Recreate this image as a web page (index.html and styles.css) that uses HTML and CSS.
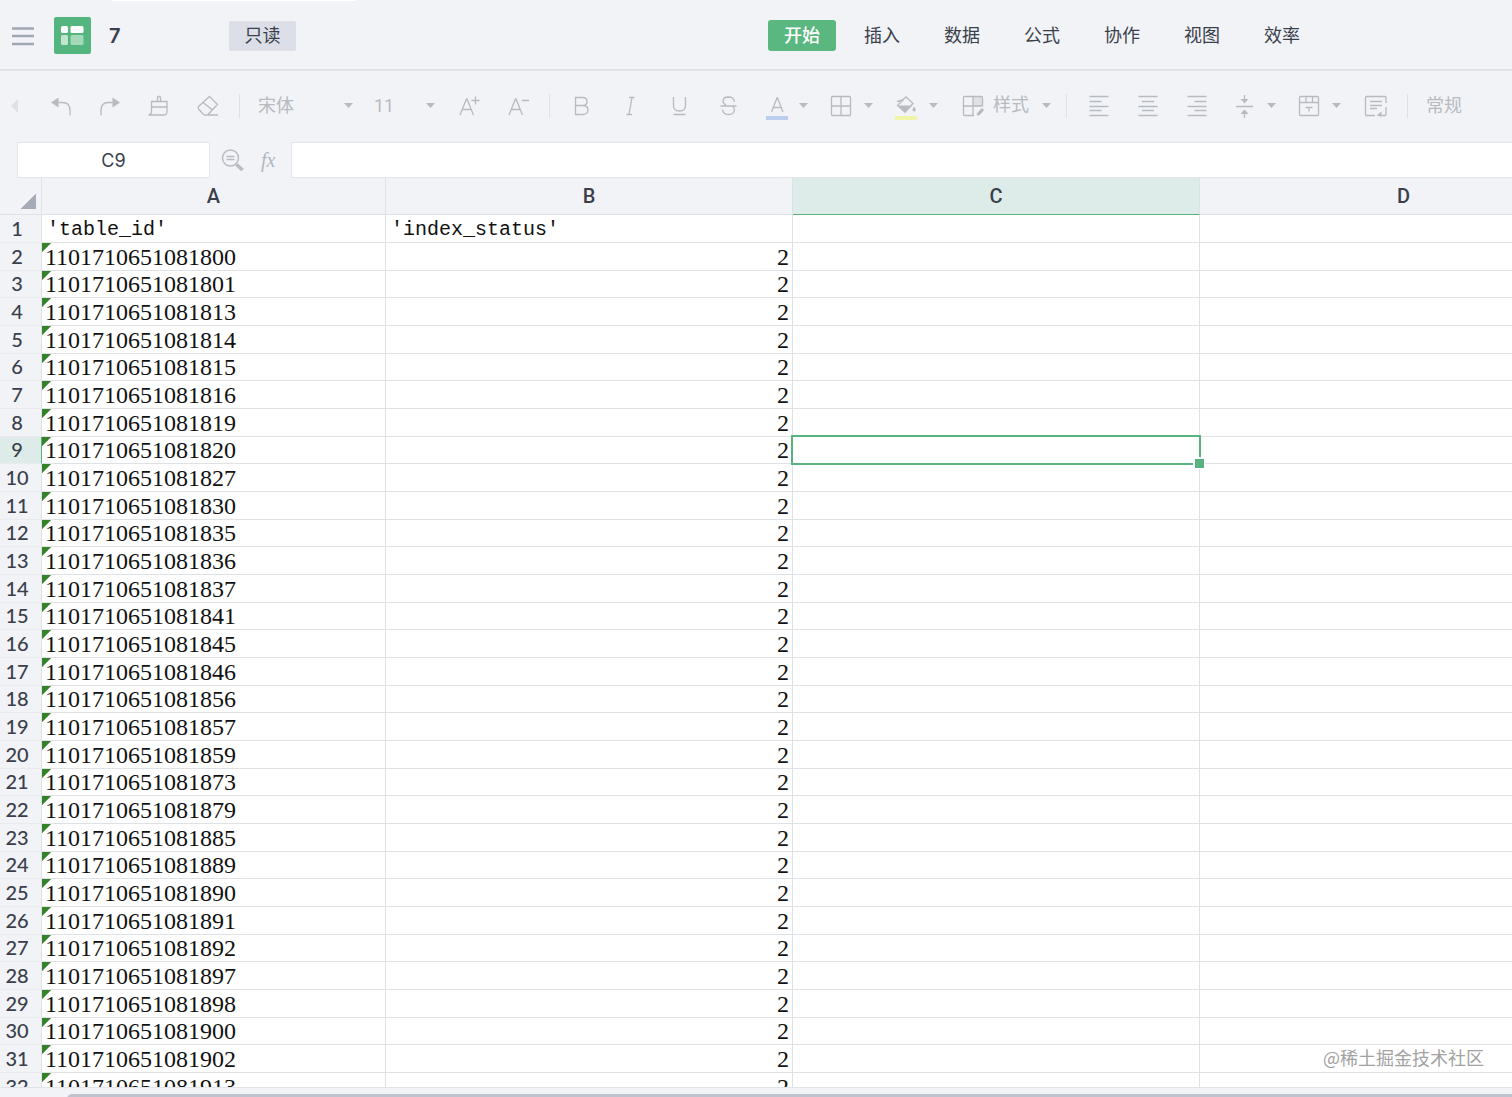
FILE: index.html
```html
<!DOCTYPE html>
<html lang="zh-CN">
<head>
<meta charset="utf-8">
<title>7</title>
<link rel="stylesheet" href="styles.css">
</head>
<body>

<header class="topbar">
  <div class="doc">
    <button class="menu" aria-label="菜单"><svg width="22" height="20" viewBox="0 0 22 20"><path d="M0 2.500h22M0 10h22M0 18h22" stroke="#a3a7b3" stroke-width="2.500"/></svg></button>
    <svg class="logo" width="37" height="37" viewBox="0 0 37 37"><rect width="37" height="37" rx="2" fill="#55b57e"/><rect x="7" y="9" width="7" height="7" rx="1.500" fill="#fff"/><rect x="16.500" y="9" width="13" height="7" rx="1.500" fill="#fff"/><rect x="7" y="18" width="7" height="10" rx="1.500" fill="#c2e5d0"/><rect x="16.500" y="18" width="13" height="10" rx="1.500" fill="#a5d8b9"/></svg>
    <h1 class="name">7</h1>
    <span class="readonly">只读</span>
  </div>
  <nav class="tabs">
    <button class="tab active">开始</button>
    <button class="tab">插入</button>
    <button class="tab">数据</button>
    <button class="tab">公式</button>
    <button class="tab">协作</button>
    <button class="tab">视图</button>
    <button class="tab">效率</button>
  </nav>
</header>

<div class="toolbar">
  <button class="tool collapse" aria-label="收起"><svg width="8" height="14" viewBox="0 0 8 14"><path class="solid faint" d="M7 0v14L0 7z"/></svg></button>
  <button class="tool" aria-label="撤销"><svg class="icon" viewBox="0 0 24 24"><path class="solid" d="M2 8.500 9.500 3.500v10z"/><path d="M9 8.500h4.500q7.500 0 7.500 8V21.500"/></svg></button>
  <button class="tool" aria-label="恢复"><svg class="icon" viewBox="0 0 24 24"><path class="solid" d="M22 8.500 14.500 3.500v10z"/><path d="M15 8.500h-4.500q-7.500 0-7.500 8V21.500"/></svg></button>
  <button class="tool" aria-label="格式刷"><svg class="icon" viewBox="0 0 24 24"><path d="M10.500 7.500v-4q0-1 1-1h1q1 0 1 1v4M4.500 7.500H20v10q0 3.500-3.500 3.500H1.500q3-.5 3-4zM4.500 13H20"/></svg></button>
  <button class="tool" aria-label="清除"><svg class="icon" viewBox="0 0 24 24"><path d="M13.500 2.500 21.500 10.500 12 20.500q-.5.500-1.500.500H9q-1 0-1.500-.5L2.500 15q-1-1.500 0-2.500zM7 8.500l9.500 7.500M8 21h14"/></svg></button>
  <i class="sep"></i>
  <div class="pick font">
    <select aria-label="字体"><option>宋体</option></select>
    <svg class="caret" viewBox="0 0 9 5"><path class="solid" d="M0 0h9L4.500 5z"/></svg>
  </div>
  <div class="pick size">
    <select aria-label="字号"><option>11</option></select>
    <svg class="caret" viewBox="0 0 9 5"><path class="solid" d="M0 0h9L4.500 5z"/></svg>
  </div>
  <button class="tool" aria-label="增大字号"><svg class="icon" viewBox="0 0 24 24"><path d="M3 21 9.500 5h.5L16.500 21M5.500 15.500H14M14.500 6.500h8M18.500 2.500v8"/></svg></button>
  <button class="tool" aria-label="减小字号"><svg class="icon" viewBox="0 0 24 24"><path d="M3 21 9.500 5h.5L16.500 21M5.500 15.500H14M16 6.500h7"/></svg></button>
  <i class="sep"></i>
  <button class="tool" aria-label="加粗"><svg class="icon" viewBox="0 0 24 24"><path d="M5.500 3.500h7q4.500 0 4.500 4t-4.500 4h-7zM5.500 11.500h8q4.500.5 4.500 4.500t-4.500 4.500h-8z"/></svg></button>
  <button class="tool" aria-label="斜体"><svg class="icon" viewBox="0 0 24 24"><path d="M10 3.500h5.500M7.500 20.500H13M13 3.500l-3 17"/></svg></button>
  <button class="tool" aria-label="下划线"><svg class="icon" viewBox="0 0 24 24"><path d="M5.500 3v8.500q0 5.500 6 5.500t6-5.500V3M5.500 20.500h12"/></svg></button>
  <button class="tool" aria-label="删除线"><svg class="icon" viewBox="0 0 24 24"><path d="M17.500 8q-.5-5-6-5-5.500.2-5.500 4 0 2.500 3 4M3.500 12h16M5.500 15.500q.5 5 6 5t6-4.500q0-2.500-2.500-4"/></svg></button>
  <button class="tool split" aria-label="字体颜色"><svg class="icon" viewBox="0 0 24 24"><path d="M6.500 18 12 4h.5L18 18M8.500 13.500H16"/><path d="M1 24h22" class="blue"/></svg><svg class="caret" viewBox="0 0 9 5"><path class="solid" d="M0 0h9L4.500 5z"/></svg></button>
  <button class="tool split" aria-label="边框"><svg class="icon" viewBox="0 0 24 24"><rect x="1.500" y="2.500" width="19" height="19" rx="1"/><path d="M11 2.500v19M1.500 12h19"/></svg><svg class="caret" viewBox="0 0 9 5"><path class="solid" d="M0 0h9L4.500 5z"/></svg></button>
  <button class="tool split" aria-label="填充颜色"><svg class="icon" viewBox="0 0 24 24"><path d="M2 7.500q5-.5 9-4.500L18 9.500 10 18 2.500 11.500 9 5"/><path class="solid" d="M3 11.500h14.500L10 18.500zM19 12.500q3.500 4.500 0 5-3-.5 0-5z"/><path d="M0 24h22" class="yellow"/></svg><svg class="caret" viewBox="0 0 9 5"><path class="solid" d="M0 0h9L4.500 5z"/></svg></button>
  <button class="tool style"><svg class="icon" viewBox="0 0 24 24"><path class="solid faint" d="M12 3h9v9h-9z"/><path d="M13 21.500H3.500q-1 0-1-1v-17q0-1 1-1h17q1 0 1 1V12M12 2.500v19M2.500 12h19"/><path class="pen" d="M16.500 21l5.500-6"/></svg><span>样式</span><svg class="caret" viewBox="0 0 9 5"><path class="solid" d="M0 0h9L4.500 5z"/></svg></button>
  <i class="sep"></i>
  <button class="tool" aria-label="左对齐"><svg class="icon" viewBox="0 0 24 24"><path d="M2.500 2.500h19M2.500 7.500h12M2.500 12.500h19M2.500 16.500h12M2.500 21.500h19"/></svg></button>
  <button class="tool" aria-label="居中"><svg class="icon" viewBox="0 0 24 24"><path d="M2.500 2.500h19M6 7.500h12M2.500 12.500h19M6 16.500h12M2.500 21.500h19"/></svg></button>
  <button class="tool" aria-label="右对齐"><svg class="icon" viewBox="0 0 24 24"><path d="M2.500 2.500h19M9.500 7.500h12M2.500 12.500h19M9.500 16.500h12M2.500 21.500h19"/></svg></button>
  <button class="tool split" aria-label="垂直对齐"><svg class="icon" viewBox="0 0 24 24"><path d="M3 12.500h17M11.500 1v6M11.500 18v6"/><path class="solid" d="M7.500 5h8l-4 4.500zM7.500 20h8l-4-4.500z"/></svg><svg class="caret" viewBox="0 0 9 5"><path class="solid" d="M0 0h9L4.500 5z"/></svg></button>
  <button class="tool split" aria-label="合并单元格"><svg class="icon" viewBox="0 0 24 24"><rect x="1.500" y="2.500" width="19" height="19" rx="1"/><path d="M1.500 8.500h19M8 2.500v6M14.500 2.500v6M7.500 13.500h7M11 13.500v4"/></svg><svg class="caret" viewBox="0 0 9 5"><path class="solid" d="M0 0h9L4.500 5z"/></svg></button>
  <button class="tool" aria-label="自动换行"><svg class="icon" viewBox="0 0 24 24"><path d="M22 9V3.500q0-1-1-1H2.500q-1 0-1 1v17q0 1 1 1H11M22 13v7.500q0 1-1 1h-5.500M6 7.500h12M6 11.500h12M6 14.500h7"/><path class="solid" d="M12.500 21.500l5-4v5z"/></svg></button>
  <i class="sep"></i>
  <div class="pick format">
    <select aria-label="数字格式"><option>常规</option></select>
  </div>
</div>

<div class="formula">
  <input class="cellname" type="text" value="C9" aria-label="单元格">
  <svg class="find" width="24" height="24" viewBox="0 0 24 24"><circle cx="9.500" cy="10" r="8"/><path d="M5.500 8.500h8M5.500 11.500h8"/><path class="handle" d="M15.500 16.500l6 5.500"/></svg>
  <label class="fx" for="fx">fx</label>
  <input class="value" id="fx" type="text">
</div>

<main class="sheet">
<table>
<colgroup><col class="c-num"><col class="c-a"><col class="c-b"><col class="c-c"><col class="c-d"></colgroup>
<thead>
<tr><th class="corner"></th><th>A</th><th>B</th><th class="on">C</th><th>D</th></tr>
</thead>
<tbody>
<tr class="labels"><th>1</th><td>'table_id'</td><td>'index_status'</td><td></td><td></td></tr>
<tr><th>2</th><td>1101710651081800</td><td>2</td><td></td><td></td></tr>
<tr><th>3</th><td>1101710651081801</td><td>2</td><td></td><td></td></tr>
<tr><th>4</th><td>1101710651081813</td><td>2</td><td></td><td></td></tr>
<tr><th>5</th><td>1101710651081814</td><td>2</td><td></td><td></td></tr>
<tr><th>6</th><td>1101710651081815</td><td>2</td><td></td><td></td></tr>
<tr><th>7</th><td>1101710651081816</td><td>2</td><td></td><td></td></tr>
<tr><th>8</th><td>1101710651081819</td><td>2</td><td></td><td></td></tr>
<tr><th class="on">9</th><td>1101710651081820</td><td>2</td><td class="selected"><div class="cursor"></div></td><td></td></tr>
<tr><th>10</th><td>1101710651081827</td><td>2</td><td></td><td></td></tr>
<tr><th>11</th><td>1101710651081830</td><td>2</td><td></td><td></td></tr>
<tr><th>12</th><td>1101710651081835</td><td>2</td><td></td><td></td></tr>
<tr><th>13</th><td>1101710651081836</td><td>2</td><td></td><td></td></tr>
<tr><th>14</th><td>1101710651081837</td><td>2</td><td></td><td></td></tr>
<tr><th>15</th><td>1101710651081841</td><td>2</td><td></td><td></td></tr>
<tr><th>16</th><td>1101710651081845</td><td>2</td><td></td><td></td></tr>
<tr><th>17</th><td>1101710651081846</td><td>2</td><td></td><td></td></tr>
<tr><th>18</th><td>1101710651081856</td><td>2</td><td></td><td></td></tr>
<tr><th>19</th><td>1101710651081857</td><td>2</td><td></td><td></td></tr>
<tr><th>20</th><td>1101710651081859</td><td>2</td><td></td><td></td></tr>
<tr><th>21</th><td>1101710651081873</td><td>2</td><td></td><td></td></tr>
<tr><th>22</th><td>1101710651081879</td><td>2</td><td></td><td></td></tr>
<tr><th>23</th><td>1101710651081885</td><td>2</td><td></td><td></td></tr>
<tr><th>24</th><td>1101710651081889</td><td>2</td><td></td><td></td></tr>
<tr><th>25</th><td>1101710651081890</td><td>2</td><td></td><td></td></tr>
<tr><th>26</th><td>1101710651081891</td><td>2</td><td></td><td></td></tr>
<tr><th>27</th><td>1101710651081892</td><td>2</td><td></td><td></td></tr>
<tr><th>28</th><td>1101710651081897</td><td>2</td><td></td><td></td></tr>
<tr><th>29</th><td>1101710651081898</td><td>2</td><td></td><td></td></tr>
<tr><th>30</th><td>1101710651081900</td><td>2</td><td></td><td></td></tr>
<tr><th>31</th><td>1101710651081902</td><td>2</td><td></td><td></td></tr>
<tr><th>32</th><td>1101710651081913</td><td>2</td><td></td><td></td></tr>
</tbody>
</table>
</main>

<footer class="scroll"><div class="thumb"></div></footer>
<div class="watermark">@稀土掘金技术社区</div>

</body>
</html>
```

FILE: styles.css
```css
* {
  box-sizing: border-box;
}

body {
  margin: 0;
  height: 100vh;
  display: flex;
  flex-direction: column;
  overflow: hidden;
  position: relative;
  background: #f1f3f7;
  color: #3a3f4b;
  font-family: Roboto, "Noto Sans CJK SC", sans-serif;
  font-size: 18px;
}

button, input, select {
  font: inherit;
  color: inherit;
  border: 0;
  padding: 0;
  margin: 0;
  background: none;
}

/* title bar */
.topbar {
  flex: none;
  height: 71px;
  display: flex;
  align-items: center;
  padding: 2px 196px 0 0;
  border-bottom: 2px solid #e1e3e8;
  background: linear-gradient(#fff, #fff) 112px 0 / 244px 1px no-repeat;
}

.doc {
  flex: 1;
  display: flex;
  align-items: center;
  padding-left: 12px;
}

.menu {
  display: flex;
}

.logo {
  margin-left: 20px;
}

.name {
  width: 120px;
  margin: 0;
  padding-left: 18px;
  font-family: Inter, sans-serif;
  font-size: 20px;
  font-weight: 600;
}

.readonly {
  width: 67px;
  margin-left: 18px;
  line-height: 30px;
  text-align: center;
  background: #dcdfe7;
  border-radius: 2px;
}

.tabs {
  display: flex;
  gap: 12px;
}

.tab {
  width: 68px;
  line-height: 31px;
  border-radius: 3px;
}

.tab.active {
  background: #5ab780;
  color: #fff;
  font-weight: 500;
}

/* toolbar */
.toolbar {
  flex: none;
  height: 71px;
  display: flex;
  align-items: center;
  padding-bottom: 2px;
  color: #b7babf;
}

.tool {
  flex: none;
  width: 49px;
  height: 36px;
  display: flex;
  align-items: center;
  justify-content: center;
}

.collapse {
  width: 36px;
  padding-right: 6px;
}

.split {
  width: 65px;
  justify-content: flex-start;
  padding-left: 12px;
  gap: 10px;
}

.style {
  width: 111px;
  justify-content: flex-start;
  padding-left: 13px;
  gap: 8px;
}

.style span {
  margin-right: 5px;
  line-height: 20px;
  padding-bottom: 2px;
}

.icon {
  width: 24px;
  height: 24px;
  flex: none;
  overflow: visible;
  fill: none;
  stroke: #b7babf;
  stroke-width: 1.3;
}

.caret {
  width: 9px;
  height: 5px;
  flex: none;
}

.solid {
  fill: #b7babf;
  stroke: none;
}

.faint {
  fill: #dfe1e5;
}

.blue {
  stroke: #bccdf0;
  stroke-width: 4;
}

.yellow {
  stroke: #f1f3a6;
  stroke-width: 4;
}

.pen {
  stroke-width: 3;
}

.sep {
  flex: none;
  width: 15px;
  height: 24px;
  background: linear-gradient(#dfe1e5, #dfe1e5) center / 1px 100% no-repeat;
}

.pick {
  flex: none;
  display: flex;
  align-items: center;
}

.pick select {
  flex: 1;
  min-width: 0;
  appearance: none;
}

.font {
  width: 114px;
  padding: 0 8px 0 11px;
}

.size {
  width: 83px;
  padding: 0 9px 0 13px;
}

.format {
  padding-left: 11px;
}

/* formula bar */
.formula {
  flex: none;
  height: 36px;
  display: flex;
  align-items: center;
  padding-left: 17px;
}

.cellname {
  width: 193px;
  height: 36px;
  border: 1px solid #e3e5e9;
  background: #fff;
  text-align: center;
  font-family: Inter, sans-serif;
}

.find {
  margin-left: 11px;
  fill: none;
  stroke: #b9bcc3;
  stroke-width: 1.5;
}

.find .handle {
  stroke-width: 3.5;
}

.fx {
  width: 46px;
  padding-left: 16px;
  color: #b3b6bd;
  font-family: "Liberation Serif", serif;
  font-size: 20px;
  font-style: italic;
}

.value {
  flex: 1;
  height: 36px;
  border: 1px solid #e3e5e9;
  border-right: 0;
  background: #fff;
}

/* grid */
.sheet {
  flex: 1;
  min-height: 0;
  overflow: hidden;
  background: #fff;
}

table {
  width: 1608px;
  table-layout: fixed;
  border-collapse: separate;
  border-spacing: 0;
}

.c-num { width: 42px; }
.c-a { width: 344px; }
.c-b { width: 407px; }
.c-c { width: 407px; }
.c-d { width: 408px; }

th, td {
  padding: 0;
  height: 28px;
  line-height: 26px;
  border-right: 1px solid #dfe2e4;
  border-bottom: 1px solid #dfe2e4;
  white-space: nowrap;
}

tbody tr:nth-child(3n) > * {
  height: 27px;
}

th {
  background: #f1f3f7;
  font-weight: 500;
}

thead th {
  height: 37px;
  font-size: 20px;
}

thead th.on {
  background: #deece9;
  border-bottom-color: #58b381;
}

thead .corner {
  background: linear-gradient(135deg, transparent 50%, #a6abb6 50%) 21px 16px / 15px 15px no-repeat #f1f3f7;
}

tbody th {
  padding: 0 7px 2px 0;
  line-height: 24px;
  border-bottom-color: #e8eaee;
  font-family: Lato, sans-serif;
  font-size: 20px;
}

tbody th.on {
  background: #deece9;
  border-right-color: #58b381;
}

td {
  color: #111;
  font-family: "Liberation Serif", serif;
  font-size: 24px;
}

td:nth-child(2) {
  padding-left: 3px;
  background: linear-gradient(135deg, #35822a 49%, transparent 52%) 0 0 / 9px 9px no-repeat;
}

td:nth-child(3) {
  padding-right: 3px;
  text-align: right;
}

.labels td:nth-child(n) {
  padding: 3px 0 0 5px;
  line-height: 24px;
  background: none;
  text-align: left;
  font-family: "Liberation Mono", monospace;
  font-size: 20px;
}

.selected {
  position: relative;
}

.cursor {
  position: absolute;
  inset: -2px;
  border: 2px solid #58b381;
}

.cursor::after {
  content: "";
  position: absolute;
  right: -6px;
  bottom: -6px;
  width: 9px;
  height: 9px;
  background: #58b381;
  border: 2px solid #fff;
  border-width: 2px 1px 1px 2px;
}

/* horizontal scrollbar */
.scroll {
  flex: none;
  height: 10px;
  padding: 6px 0 0 67px;
  border-top: 1px solid #e1e4e8;
  overflow: hidden;
}

.thumb {
  height: 10px;
  border-radius: 5px 0 0 5px;
  background: #bfc3cd;
}

.watermark {
  position: absolute;
  right: 28px;
  bottom: 27px;
  color: #a2a2a2;
  font-family: "Noto Sans CJK SC", sans-serif;
  line-height: 26px;
}
```
